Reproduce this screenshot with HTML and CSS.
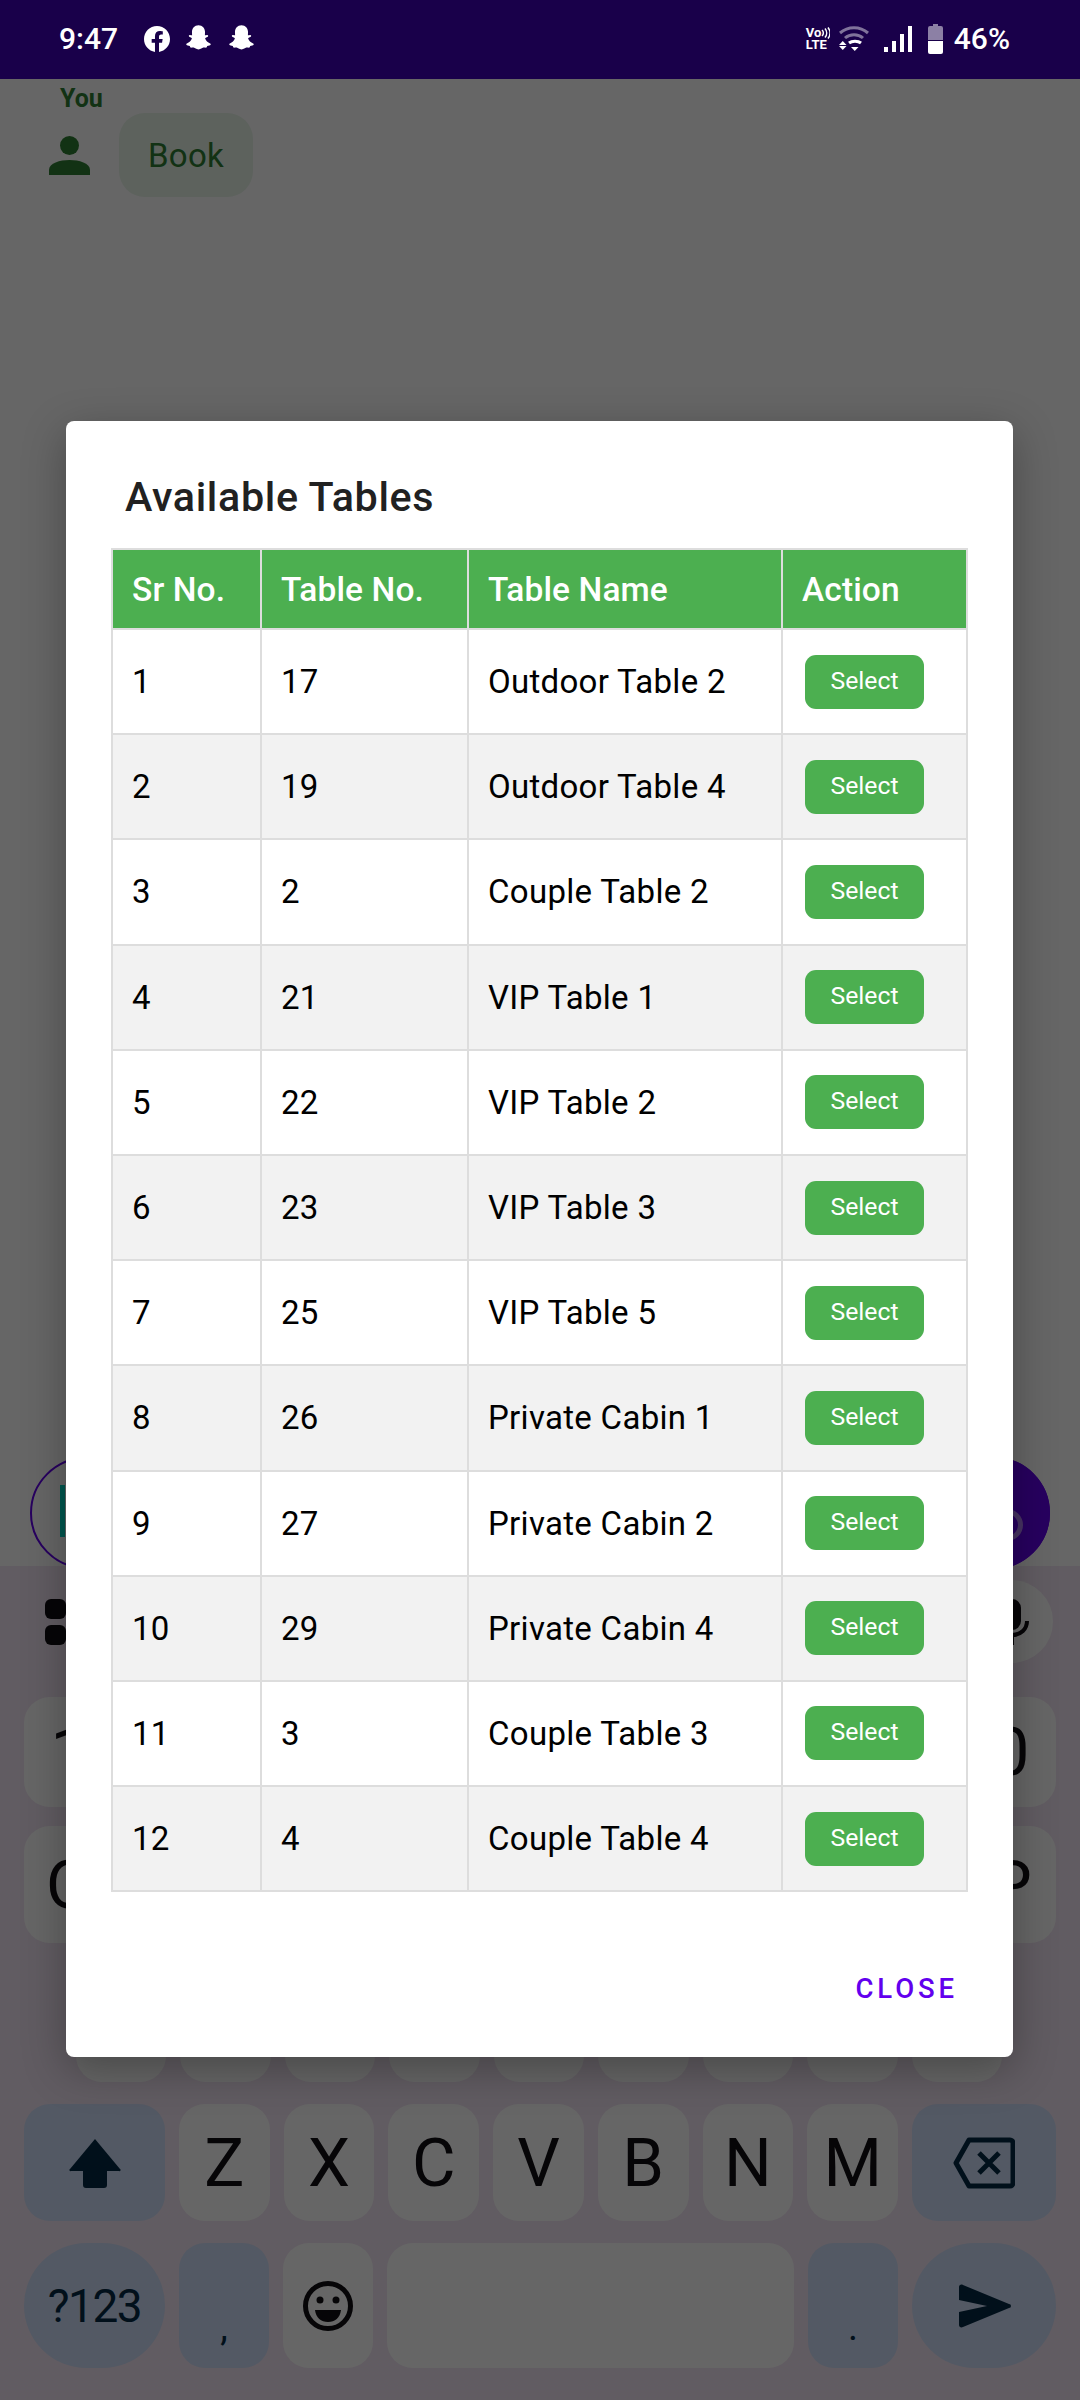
FILE: index.html
```html
<!DOCTYPE html>
<html>

<head>
    <title>Available Tables</title>
    <link rel="stylesheet" href="styles.css">
</head>

<body>
    <div class="screen">
        <!-- Status bar sits above the scrim -->
        <div class="status-bar">
            <span class="clock">9:47</span>
            <svg class="ic-fb" viewBox="0 0 24 24"><path fill="#fff" d="M24 12.07C24 5.4 18.63 0 12 0S0 5.4 0 12.07c0 6.03 4.39 11.02 10.13 11.93v-8.44H7.08v-3.49h3.05V9.41c0-3.02 1.79-4.69 4.53-4.69 1.31 0 2.69.24 2.69.24v2.97h-1.52c-1.49 0-1.96.93-1.96 1.89v2.25h3.33l-.53 3.49h-2.8V24C19.61 23.09 24 18.1 24 12.07z"/></svg>
            <svg class="ic-snap" viewBox="0 0 24 24"><path fill="#fff" d="M12 1c3.3 0 5.4 2.5 5.4 5.6 0 .9-.1 1.9-.1 2.7.5.2 1.1 0 1.6-.1.6 0 1.1.4 1.1.8 0 .6-1 1-1.9 1.3-.4.1-.7.4-.6.8.5 1.7 2.2 3.4 4.1 4 .6.2.7.6.4 1-.4.6-1.6.9-2.8 1.1-.3.4-.2 1.1-.6 1.3-.7.2-1.6-.2-2.6 0-1.2.3-2 1.5-4 1.5s-2.8-1.2-4-1.5c-1-.2-1.9.2-2.6 0-.4-.2-.3-.9-.6-1.3-1.2-.2-2.4-.5-2.8-1.1-.3-.4-.2-.8.4-1 1.9-.6 3.6-2.3 4.1-4 .1-.4-.2-.7-.6-.8-.9-.3-1.9-.7-1.9-1.3 0-.4.5-.8 1.1-.8.5.1 1.1.3 1.6.1 0-.8-.1-1.8-.1-2.7C6.6 3.500 8.700 1 12 1z"/></svg>
            <svg class="ic-snap" viewBox="0 0 24 24"><path fill="#fff" d="M12 1c3.3 0 5.4 2.5 5.4 5.6 0 .9-.1 1.9-.1 2.7.5.2 1.1 0 1.6-.1.6 0 1.1.4 1.1.8 0 .6-1 1-1.9 1.3-.4.1-.7.4-.6.8.5 1.7 2.2 3.4 4.1 4 .6.2.7.6.4 1-.4.6-1.6.9-2.8 1.1-.3.4-.2 1.1-.6 1.3-.7.2-1.6-.2-2.6 0-1.2.3-2 1.5-4 1.5s-2.8-1.2-4-1.5c-1-.2-1.9.2-2.6 0-.4-.2-.3-.9-.6-1.3-1.2-.2-2.4-.5-2.8-1.1-.3-.4-.2-.8.4-1 1.9-.6 3.6-2.3 4.1-4 .1-.4-.2-.7-.6-.8-.9-.3-1.9-.7-1.9-1.3 0-.4.5-.8 1.1-.8.5.1 1.1.3 1.6.1 0-.8-.1-1.8-.1-2.7C6.6 3.500 8.700 1 12 1z"/></svg>

            <div class="status-right">
                <div class="volte">
                    <span class="volte-top">Vo<svg class="ic-waves" viewBox="0 0 9 12"><path fill="none" stroke="#fff" stroke-width="1.500" d="M1 3a4 4 0 0 1 0 6M4 1.500a7 7 0 0 1 0 9M7 .5a9 9 0 0 1 0 11"/></svg></span>
                    <span class="volte-bottom">LTE</span>
                </div>
                <svg class="ic-wifi" viewBox="0 0 30 25">
                    <path fill="none" stroke="#fff" stroke-opacity=".45" stroke-width="3" d="M1 7C9 0 21 0 29 7"/>
                    <path fill="none" stroke="#fff" stroke-opacity=".45" stroke-width="3" d="M6 12c5-4.500 13-4.500 18 0"/>
                    <path fill="none" stroke="#fff" stroke-width="3" d="M10 17c3-2.500 9-2.500 12 0"/>
                    <path fill="#fff" d="M0 19l3.750-4 3.750 4zM0 20h7.500l-3.750 4zM12 21h7.500l-3.750 4z"/>
                </svg>
                <svg class="ic-signal" viewBox="0 0 28 26">
                    <rect x="0" y="21" width="4" height="5" fill="#fff"/>
                    <rect x="8" y="15" width="4" height="11" fill="#fff"/>
                    <rect x="16" y="8" width="4" height="18" fill="#fff"/>
                    <rect x="24" y="0" width="4" height="26" fill="#fff"/>
                </svg>
                <svg class="ic-battery" viewBox="0 0 15 30">
                    <path fill="#fff" fill-opacity=".5" d="M5 0h5v2h3a2 2 0 0 1 2 2v12H0V4a2 2 0 0 1 2-2h3z"/>
                    <path fill="#fff" d="M0 17h15v11a2 2 0 0 1-2 2H2a2 2 0 0 1-2-2z"/>
                </svg>
                <span class="battery-text">46%</span>
            </div>
        </div>

        <!-- Chat behind the dialog -->
        <div class="chat">
            <div class="sender">You</div>
            <div class="message">
                <svg class="ic-person" viewBox="0 0 41 39"><circle cx="20.500" cy="9.500" r="9.500"/><path d="M0 39v-5c0-7 11-10 20.500-10S41 27 41 34v5z"/></svg>
                <div class="bubble">Book</div>
            </div>
        </div>

        <div class="composer">
            <div class="composer-pill">
                <div class="cursor"></div>
                <div class="send-fab">
                    <svg class="ic-cancel" viewBox="0 0 32 32"><circle cx="16" cy="16" r="13.500" fill="none" stroke="#fff" stroke-opacity=".5" stroke-width="5"/><path fill="none" stroke="#fff" stroke-opacity=".5" stroke-width="2.500" d="M11 11l10 10M21 11L11 21"/></svg>
                </div>
            </div>
        </div>

        <div class="keyboard">
            <div class="kb-tools">
                <div class="grid-icon"><i></i><i></i><i></i><i></i></div>
                <div class="mic-pill">
                    <svg class="ic-mic" viewBox="0 0 34 46"><rect x="8" y="0" width="18" height="31" rx="9" fill="#100d12"/><path fill="none" stroke="#100d12" stroke-width="4" d="M2 22c0 8 6 14 15 14s15-6 15-14M17 36v10"/></svg>
                </div>
            </div>

            <!-- Keys behind the dialog have no legend, only the row ends show -->
            <div class="kb-row row-num">
                <div class="key">1</div><div class="key"></div><div class="key"></div><div class="key"></div><div class="key"></div>
                <div class="key"></div><div class="key"></div><div class="key"></div><div class="key"></div><div class="key">0</div>
            </div>
            <div class="kb-row row-q">
                <div class="key">Q</div><div class="key"></div><div class="key"></div><div class="key"></div><div class="key"></div>
                <div class="key"></div><div class="key"></div><div class="key"></div><div class="key"></div><div class="key">P</div>
            </div>
            <div class="kb-row row-a">
                <div class="key"></div><div class="key"></div><div class="key"></div><div class="key"></div><div class="key"></div>
                <div class="key"></div><div class="key"></div><div class="key"></div><div class="key"></div>
            </div>
            <div class="kb-row">
                <div class="key key-fn key-wide">
                    <svg class="ic-shift" viewBox="0 0 52 50"><path d="M26 1L51 31a1 1 0 0 1-1 2H38v14a3 3 0 0 1-3 3H17a3 3 0 0 1-3-3V33H2a1 1 0 0 1-1-2z"/></svg>
                </div>
                <div class="key">Z</div><div class="key">X</div><div class="key">C</div><div class="key">V</div>
                <div class="key">B</div><div class="key">N</div><div class="key">M</div>
                <div class="key key-fn key-back">
                    <svg class="ic-back" viewBox="0 0 62 52"><path fill="none" stroke="#042a45" stroke-width="5" stroke-linejoin="round" d="M16 3h41a3 3 0 0 1 3 3v40a3 3 0 0 1-3 3H16L3 26z"/><path fill="none" stroke="#042a45" stroke-width="5" d="M26 16l20 20M46 16L26 36"/></svg>
                </div>
            </div>
            <div class="kb-row row-bottom">
                <div class="key key-fn key-wide key-pill key-sym">?123</div>
                <div class="key key-fn key-narrow key-punct">,</div>
                <div class="key key-narrow">
                    <svg class="ic-emoji" viewBox="0 0 50 50"><circle cx="25" cy="25" r="22.500" fill="none" stroke="#100d12" stroke-width="5"/><circle cx="17" cy="19" r="3.500" fill="#100d12"/><circle cx="33" cy="19" r="3.500" fill="#100d12"/><path fill="#100d12" d="M12 29h26c-1 8-6 12-13 12s-12-4-13-12z"/></svg>
                </div>
                <div class="key key-space"></div>
                <div class="key key-fn key-narrow key-punct">.</div>
                <div class="key key-fn key-back key-pill">
                    <svg class="ic-enter" viewBox="0 0 53 44"><path d="M1 3c0-2 2-3 4-2l46 19a2 2 0 0 1 0 4L5 43c-2 1-4 0-4-2V28l28-6L1 16z"/></svg>
                </div>
            </div>
        </div>

        <div class="scrim"></div>

        <!-- Dialog -->
        <div class="dialog">
            <h2 class="dialog-title">Available Tables</h2>
            <table class="tables">
                <colgroup>
                    <col class="col-sr">
                    <col class="col-no">
                    <col class="col-name">
                    <col class="col-action">
                </colgroup>
                <tr>
                    <th>Sr No.</th>
                    <th>Table No.</th>
                    <th>Table Name</th>
                    <th>Action</th>
                </tr>
                <tr><td>1</td><td>17</td><td>Outdoor Table 2</td><td><button class="select-btn">Select</button></td></tr>
                <tr><td>2</td><td>19</td><td>Outdoor Table 4</td><td><button class="select-btn">Select</button></td></tr>
                <tr><td>3</td><td>2</td><td>Couple Table 2</td><td><button class="select-btn">Select</button></td></tr>
                <tr><td>4</td><td>21</td><td>VIP Table 1</td><td><button class="select-btn">Select</button></td></tr>
                <tr><td>5</td><td>22</td><td>VIP Table 2</td><td><button class="select-btn">Select</button></td></tr>
                <tr><td>6</td><td>23</td><td>VIP Table 3</td><td><button class="select-btn">Select</button></td></tr>
                <tr><td>7</td><td>25</td><td>VIP Table 5</td><td><button class="select-btn">Select</button></td></tr>
                <tr><td>8</td><td>26</td><td>Private Cabin 1</td><td><button class="select-btn">Select</button></td></tr>
                <tr><td>9</td><td>27</td><td>Private Cabin 2</td><td><button class="select-btn">Select</button></td></tr>
                <tr><td>10</td><td>29</td><td>Private Cabin 4</td><td><button class="select-btn">Select</button></td></tr>
                <tr><td>11</td><td>3</td><td>Couple Table 3</td><td><button class="select-btn">Select</button></td></tr>
                <tr><td>12</td><td>4</td><td>Couple Table 4</td><td><button class="select-btn">Select</button></td></tr>
            </table>
            <div class="dialog-actions">
                <span class="close-btn">CLOSE</span>
            </div>
        </div>
    </div>
</body>

</html>
```
FILE: styles.css
```css
body {
    margin: 0;
    padding: 0;
    background-color: #fff;
    font-family: Roboto, "Liberation Sans", sans-serif;
}

.screen {
    position: relative;
    width: 1080px;
    height: 2400px;
    overflow: hidden;
    display: flex;
    flex-direction: column;
}

/* Status bar */
.status-bar {
    position: relative;
    z-index: 3;
    flex: none;
    height: 79px;
    box-sizing: border-box;
    padding: 0 70px 2px 59px;
    display: flex;
    align-items: center;
    background-color: #19004a;
    color: #fff;
}

.clock {
    font-size: 30px;
    font-weight: 500;
    margin-right: 26px;
}

.ic-fb {
    width: 26px;
    height: 26px;
    margin-right: 14px;
}

.ic-snap {
    width: 29px;
    height: 29px;
    margin-right: 14px;
}

.status-right {
    margin-left: auto;
    display: flex;
    align-items: center;
}

.volte {
    display: flex;
    flex-direction: column;
    width: 25px;
    margin-right: 8px;
    font-size: 13px;
    font-weight: 700;
    line-height: 12px;
}

.volte-top {
    display: flex;
    align-items: center;
}

.ic-waves {
    width: 9px;
    height: 12px;
}

.ic-wifi {
    width: 30px;
    height: 25px;
    margin-right: 15px;
}

.ic-signal {
    width: 28px;
    height: 26px;
    margin-right: 16px;
}

.ic-battery {
    width: 15px;
    height: 30px;
    margin-right: 11px;
}

.battery-text {
    font-size: 30px;
    font-weight: 500;
}

/* Chat */
.chat {
    flex: 1;
    padding: 5px 0 0 60px;
}

.sender {
    color: #2e7d32;
    font-size: 25px;
    font-weight: 700;
    line-height: 29px;
}

.message {
    display: flex;
    align-items: center;
    margin: 0 0 0 -11px;
}

.ic-person {
    width: 41px;
    height: 39px;
    margin-right: 29px;
    fill: #2e7d32;
}

.bubble {
    width: 134px;
    height: 84px;
    box-sizing: border-box;
    padding-top: 2px;
    line-height: 82px;
    text-align: center;
    border-radius: 26px;
    background-color: #e8f5e9;
    color: #2e7d32;
    font-size: 33px;
    letter-spacing: 0.3px;
}

/* Message box */
.composer {
    flex: none;
    height: 141px;
    box-sizing: border-box;
    padding: 32px 30px 0;
    overflow: hidden;
}

.composer-pill {
    position: relative;
    height: 112px;
    box-sizing: border-box;
    border: 2px solid #6200ee;
    border-radius: 56px;
    display: flex;
    align-items: flex-start;
    justify-content: space-between;
}

.cursor {
    width: 5px;
    height: 52px;
    margin: 26px 0 0 28px;
    background-color: #03dac5;
}

.send-fab {
    width: 112px;
    height: 112px;
    margin: -2px -2px 0 0;
    border-radius: 50%;
    background-color: #6200ee;
    display: flex;
    align-items: flex-start;
    justify-content: flex-start;
}

.ic-cancel {
    width: 32px;
    height: 32px;
    margin: 52px 0 0 53px;
}

/* Keyboard */
.keyboard {
    flex: none;
    height: 834px;
    box-sizing: border-box;
    padding-top: 14px;
    background-color: #f3e6f5;
}

.kb-tools {
    height: 83px;
    padding: 0 27px 0 45px;
    margin-bottom: 34px;
    display: flex;
    align-items: center;
    justify-content: space-between;
}

.grid-icon {
    display: grid;
    grid-template-columns: 21px 21px;
    grid-auto-rows: 20px;
    gap: 6px;
}

.grid-icon i {
    border-radius: 6px;
    background-color: #100d12;
}

.mic-pill {
    width: 120px;
    height: 83px;
    box-sizing: border-box;
    padding-left: 62px;
    border-radius: 42px;
    background-color: #fff;
    display: flex;
    align-items: center;
}

.ic-mic {
    width: 34px;
    height: 46px;
}

.kb-row {
    height: 117px;
    padding: 0 24px;
    margin-bottom: 22px;
    display: flex;
    gap: 14px;
}

.row-num {
    height: 110px;
    margin-bottom: 19px;
}

.row-q {
    margin-bottom: 22px;
}

.row-a {
    padding: 0 78px 0 76px;
}

.row-bottom {
    height: 125px;
}

.key {
    flex: 1;
    border-radius: 26px;
    background-color: #fff;
    color: #100d12;
    font-size: 67px;
    display: flex;
    align-items: center;
    justify-content: center;
}

.key-fn {
    background-color: #d0def9;
    color: #042a45;
}

.key-wide {
    flex: none;
    width: 141px;
}

.key-back {
    flex: none;
    width: 144px;
}

.key-narrow {
    flex: none;
    width: 90px;
}

.key-pill {
    border-radius: 63px;
}

.key-sym {
    font-size: 46px;
    letter-spacing: -1.5px;
}

.key-punct {
    font-size: 38px;
    padding-top: 42px;
    box-sizing: border-box;
}

.ic-shift {
    width: 52px;
    height: 50px;
    fill: #042a45;
}

.ic-back {
    width: 62px;
    height: 52px;
}

.ic-emoji {
    width: 50px;
    height: 50px;
}

.ic-enter {
    width: 53px;
    height: 44px;
    fill: #042a45;
}

/* Scrim and dialog lie over everything */
.scrim {
    position: absolute;
    top: 0;
    right: 0;
    bottom: 0;
    left: 0;
    z-index: 1;
    background-color: rgba(0, 0, 0, 0.6);
}

.dialog {
    position: absolute;
    z-index: 2;
    top: 421px;
    left: 66px;
    width: 947px;
    height: 1636px;
    border-radius: 8px;
    background-color: #fff;
    box-shadow: 0 12px 44px rgba(0, 0, 0, 0.3);
}

.dialog-title {
    margin: 0;
    padding: 52px 0 27px 59px;
    color: #212121;
    font-size: 41.25px;
    font-weight: 500;
    line-height: 48px;
    letter-spacing: 0.65px;
}

/* Table Styles */
.tables {
    table-layout: fixed;
    width: 855px;
    margin-left: 45px;
    border-collapse: collapse;
    font-size: 33px;
    letter-spacing: 0.3px;
}

.col-sr {
    width: 149px;
}

.col-no {
    width: 207px;
}

.col-name {
    width: 314px;
}

.col-action {
    width: 185px;
}

.tables th,
.tables td {
    padding: 0 0 0 19px;
    border: 2px solid #ddd;
    text-align: left;
    color: #000;
}

.tables th {
    height: 78px;
    background-color: #4caf50;
    color: #fff;
    font-size: 33.5px;
    font-weight: 500;
    letter-spacing: 0.1px;
}

.tables td {
    height: 103.2px;
}

.tables tr:nth-child(odd) td {
    background-color: #f2f2f2;
}

.select-btn {
    display: block;
    width: 119px;
    height: 54px;
    margin: 0 0 0 3px;
    padding: 0 0 3px;
    border: none;
    border-radius: 11px;
    background-color: #4caf50;
    color: #fff;
    font-family: Roboto, sans-serif;
    font-size: 24.75px;
}

.dialog-actions {
    display: flex;
    justify-content: flex-end;
    padding: 73px 55px 0 0;
    line-height: 48px;
}

.close-btn {
    color: #6200ee;
    font-size: 27.5px;
    font-weight: 500;
    letter-spacing: 3.9px;
}
```
